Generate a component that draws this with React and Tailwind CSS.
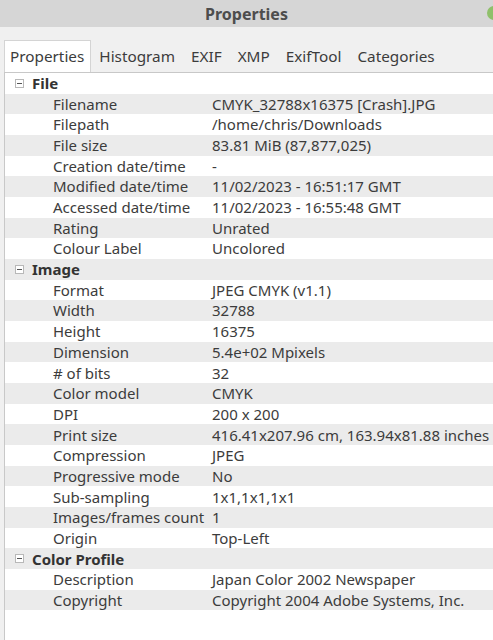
import React from "react";

const sections = [
  {
    title: "File",
    rows: [
      ["Filename", "CMYK_32788x16375 [Crash].JPG"],
      ["Filepath", "/home/chris/Downloads"],
      ["File size", "83.81 MiB (87,877,025)"],
      ["Creation date/time", "-"],
      ["Modified date/time", "11/02/2023 - 16:51:17 GMT"],
      ["Accessed date/time", "11/02/2023 - 16:55:48 GMT"],
      ["Rating", "Unrated"],
      ["Colour Label", "Uncolored"],
    ],
  },
  {
    title: "Image",
    rows: [
      ["Format", "JPEG CMYK (v1.1)"],
      ["Width", "32788"],
      ["Height", "16375"],
      ["Dimension", "5.4e+02 Mpixels"],
      ["# of bits", "32"],
      ["Color model", "CMYK"],
      ["DPI", "200 x 200"],
      ["Print size", "416.41x207.96 cm, 163.94x81.88 inches"],
      ["Compression", "JPEG"],
      ["Progressive mode", "No"],
      ["Sub-sampling", "1x1,1x1,1x1"],
      ["Images/frames count", "1"],
      ["Origin", "Top-Left"],
    ],
  },
  {
    title: "Color Profile",
    rows: [
      ["Description", "Japan Color 2002 Newspaper"],
      ["Copyright", "Copyright 2004 Adobe Systems, Inc."],
    ],
  },
];

const tabs = ["Properties", "Histogram", "EXIF", "XMP", "ExifTool", "Categories"];

const Expander = () => (
  <span className="flex h-[9px] w-[9px] items-center justify-center border border-[#b8b8b8] bg-white">
    <span className="h-px w-[5px] bg-[#555]" />
  </span>
);

export default function App() {
  // flatten to get the global row index for stripes
  let idx = 0;
  const lines = [];
  sections.forEach((s) => {
    lines.push({ type: "head", title: s.title, i: idx++ });
    s.rows.forEach(([k, v]) => lines.push({ type: "row", k, v, i: idx++ }));
  });

  return (
    <div
      className="flex h-[640px] w-[493px] flex-col overflow-hidden bg-[#f0f0f0] text-[#3c3c3c]"
      style={{ fontFamily: '"Noto Sans", "Open Sans", sans-serif' }}
    >
      <div className="relative flex h-[27px] shrink-0 items-center justify-center bg-[#d6d6d6]">
        <span className="text-[16px] font-bold text-[#4d4d4d]">Properties</span>
        <span className="absolute right-[-8px] top-[6px] h-[14px] w-[14px] rounded-full bg-[#8fc06a]" />
      </div>

      <div className="flex h-[45px] shrink-0 items-end pl-[4px]">
        <div className="flex items-center">
          {tabs.map((t, n) => (
            <div
              key={t}
              className={
                n === 0
                  ? "flex h-[32px] items-center border border-b-0 border-[#d4d4d4] bg-white pl-[5px] pr-[6px] text-[15.3px]"
                  : "flex h-[32px] items-center px-[8px] text-[15.3px]"
              }
            >
              {t}
            </div>
          ))}
        </div>
      </div>

      <div className="ml-[4px] flex-1 border-l border-t border-[#c8c8c8] bg-white">
        {lines.map((l) =>
          l.type === "head" ? (
            <div
              key={l.title}
              className={`flex h-[20.68px] items-center ${l.i % 2 ? "bg-[#ebebeb]" : "bg-white"}`}
            >
              <span className="ml-[10px] mr-[8px]">
                <Expander />
              </span>
              <span className="text-[15px] font-bold text-[#333]">{l.title}</span>
            </div>
          ) : (
            <div
              key={l.k}
              className={`flex h-[20.68px] items-center whitespace-nowrap text-[15px] ${l.i % 2 ? "bg-[#ebebeb]" : "bg-white"}`}
            >
              <span className="w-[207px] shrink-0 pl-[48px]">{l.k}</span>
              <span>{l.v}</span>
            </div>
          )
        )}
      </div>
    </div>
  );
}
